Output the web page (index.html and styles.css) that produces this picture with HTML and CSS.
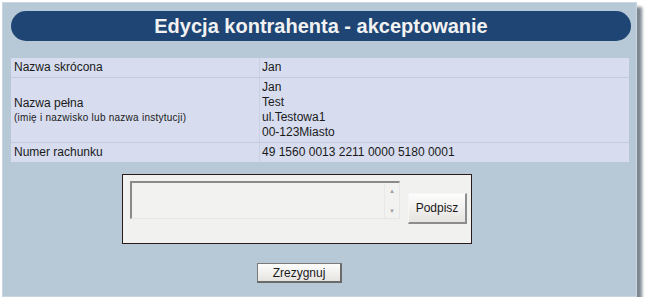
FILE: index.html
```html
<!DOCTYPE html>
<html>
<head>
<meta charset="utf-8">
<link rel="stylesheet" href="styles.css">
</head>
<body>
<div class="panel">
  <div class="header">Edycja kontrahenta - akceptowanie</div>
  <div class="table">
    <div class="row r1">
      <div class="label">Nazwa skrócona</div>
      <div class="value">Jan</div>
    </div>
    <div class="row r2">
      <div class="label">Nazwa pełna<div class="hint">(imię i nazwisko lub nazwa instytucji)</div></div>
      <div class="value">Jan<br>Test<br>ul.Testowa1<br>00-123Miasto</div>
    </div>
    <div class="row r3">
      <div class="label">Numer rachunku</div>
      <div class="value">49 1560 0013 2211 0000 5180 0001</div>
    </div>
  </div>
  <div class="signbox">
    <div class="textarea">
      <div class="scroll"><span class="arr">&#9650;</span><span class="arr">&#9660;</span></div>
    </div>
    <div class="btn sign">Podpisz</div>
  </div>
  <div class="bottom"><div class="btn cancel">Zrezygnuj</div></div>
</div>
</body>
</html>
```

FILE: styles.css
```css
html, body { margin: 0; padding: 0; background: #fff; }
body { padding: 2px 0 0 2px; font-family: "Liberation Sans", Arial, sans-serif; }
.panel {
  width: 626px;
  height: 285px;
  padding: 8px 0 0 7px;
  background: #b7c8d7;
  border: 1px solid #c9d6e2;
  box-shadow: 5px 5px 3px #7d8690;
  box-sizing: content-box;
}
.header {
  width: 620px;
  height: 30px;
  margin-left: 1px;
  border-radius: 15px;
  background: #1e4574;
  color: #f2f2f2;
  font-weight: bold;
  font-size: 20px;
  line-height: 30px;
  text-align: center;
}
.table {
  margin-top: 17px;
  width: 618px;
  margin-left: 1px;
  font-size: 12px;
  color: #1a1a1a;
}
.row {
  display: grid;
  grid-template-columns: 248px 1fr;
  background: #d7ddef;
  border-bottom: 1px solid #c2cddb;
}
.row:last-child { border-bottom: none; }
.label { padding-left: 3px; display: flex; flex-direction: column; justify-content: center; }
.value { padding-left: 2px; border-left: 1px solid #c9d2e2; display: flex; flex-direction: column; justify-content: center; }
.r1, .r3 { height: 19px; line-height: 19px; }
.r2 { height: 64px; line-height: 15px; }
.hint { font-size: 10px; line-height: 14px; letter-spacing: 0.25px; }
.value { line-height: 15px; }
.r1 .value, .r3 .value { line-height: 19px; }
.signbox {
  margin: 12px 0 0 112px;
  width: 350px;
  height: 70px;
  border: 1px solid #2a1a1a;
  background: #f1f1ef;
  display: flex;
  align-items: flex-start;
  box-sizing: border-box;
}
.textarea {
  margin: 6px 0 0 7px;
  width: 270px;
  height: 38px;
  border-top: 2px solid #8a8a8a;
  border-left: 2px solid #8a8a8a;
  border-bottom: 1px solid #e6e6e6;
  border-right: 1px solid #e6e6e6;
  background: #f2f2f0;
  box-sizing: border-box;
  display: flex;
  justify-content: flex-end;
}
.scroll {
  width: 14px;
  display: flex;
  flex-direction: column;
  justify-content: space-between;
  align-items: center;
  padding: 4px 0 3px;
  border-left: 1px solid #e8e8e8;
}
.arr { font-size: 6px; color: #a0a0a0; line-height: 8px; }
.btn {
  background: linear-gradient(#fdfdfd, #e6e4e0);
  border-top: 1px solid #f6f6f6;
  border-left: 1px solid #f6f6f6;
  border-right: 2px solid #8c8c8c;
  border-bottom: 2px solid #8c8c8c;
  font-size: 12px;
  color: #1a1a1a;
  text-align: center;
  box-sizing: border-box;
}
.sign {
  margin: 18px 0 0 8px;
  width: 59px;
  height: 31px;
  line-height: 28px;
}
.bottom { display: flex; padding: 19px 0 0 247px; }
.cancel {
  width: 85px;
  height: 20px;
  line-height: 18px;
  border: 1px solid #7a7a7a;
  border-right: 2px solid #6a6a6a;
  border-bottom: 2px solid #6a6a6a;
}
```
